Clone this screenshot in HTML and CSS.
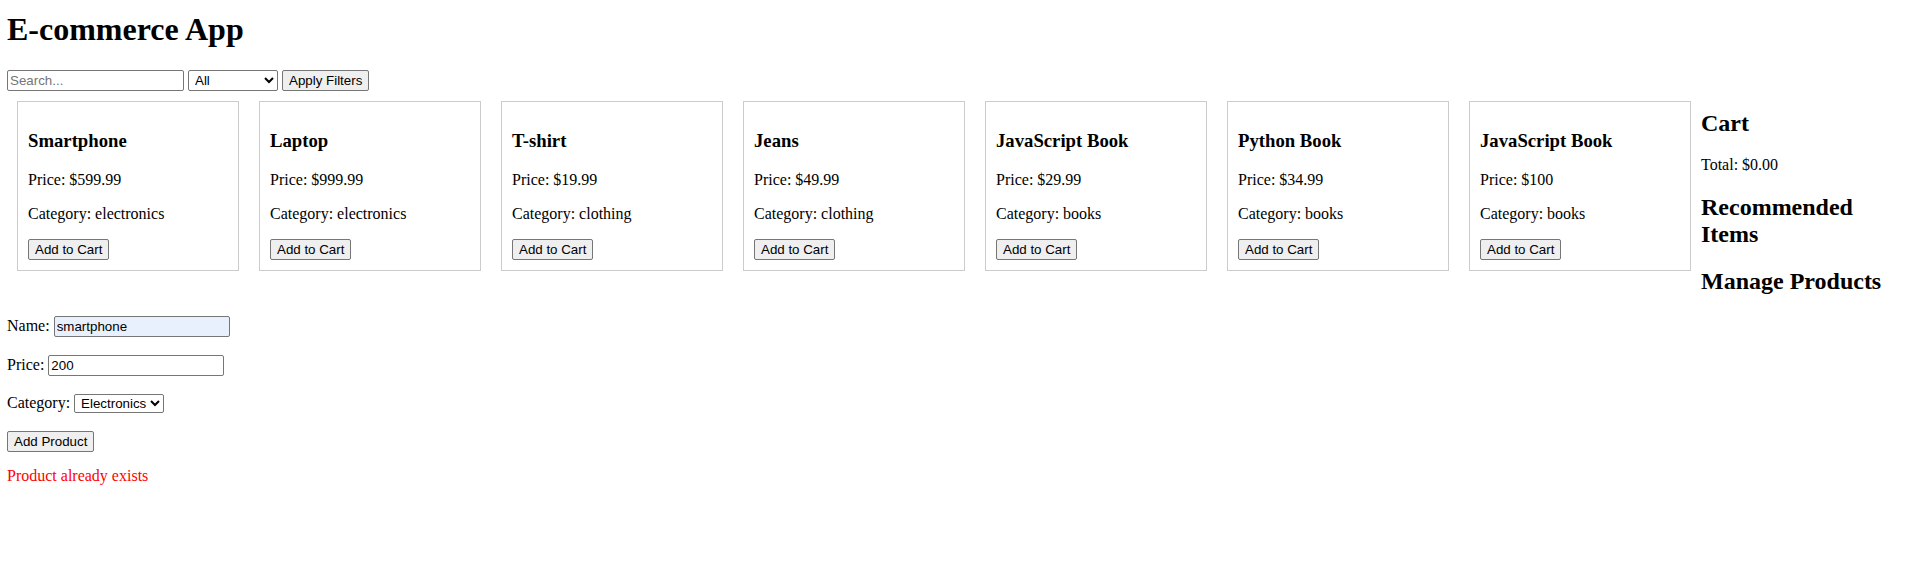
FILE: index.html
```html
<!DOCTYPE html>
<html lang="en">
<head>
<meta charset="utf-8">
<title>E-commerce App</title>
<link rel="stylesheet" href="styles.css">
</head>
<body>
<div class="app">
  <h1 class="title">E-commerce App</h1>
  <div class="filters">
    <input class="ctl search" type="text" placeholder="Search...">
    <select class="ctl select filter-select">
      <option>All</option>
      <option>Electronics</option>
      <option>Clothing</option>
      <option>Books</option>
    </select>
    <button class="ctl btn" type="button">Apply Filters</button>
  </div>
  <div class="main">
    <div class="products">
      <div class="card">
        <h3 class="card-title">Smartphone</h3>
        <p class="card-text">Price: $599.99</p>
        <p class="card-text">Category: electronics</p>
        <button class="ctl btn card-btn" type="button">Add to Cart</button>
      </div>
      <div class="card">
        <h3 class="card-title">Laptop</h3>
        <p class="card-text">Price: $999.99</p>
        <p class="card-text">Category: electronics</p>
        <button class="ctl btn card-btn" type="button">Add to Cart</button>
      </div>
      <div class="card">
        <h3 class="card-title">T-shirt</h3>
        <p class="card-text">Price: $19.99</p>
        <p class="card-text">Category: clothing</p>
        <button class="ctl btn card-btn" type="button">Add to Cart</button>
      </div>
      <div class="card">
        <h3 class="card-title">Jeans</h3>
        <p class="card-text">Price: $49.99</p>
        <p class="card-text">Category: clothing</p>
        <button class="ctl btn card-btn" type="button">Add to Cart</button>
      </div>
      <div class="card">
        <h3 class="card-title">JavaScript Book</h3>
        <p class="card-text">Price: $29.99</p>
        <p class="card-text">Category: books</p>
        <button class="ctl btn card-btn" type="button">Add to Cart</button>
      </div>
      <div class="card">
        <h3 class="card-title">Python Book</h3>
        <p class="card-text">Price: $34.99</p>
        <p class="card-text">Category: books</p>
        <button class="ctl btn card-btn" type="button">Add to Cart</button>
      </div>
      <div class="card">
        <h3 class="card-title">JavaScript Book</h3>
        <p class="card-text">Price: $100</p>
        <p class="card-text">Category: books</p>
        <button class="ctl btn card-btn" type="button">Add to Cart</button>
      </div>
    </div>
    <aside class="sidebar">
      <h2 class="side-title">Cart</h2>
      <p class="side-text">Total: $0.00</p>
      <h2 class="side-title">Recommended Items</h2>
      <h2 class="side-title">Manage Products</h2>
    </aside>
  </div>
  <form class="manage">
    <div class="row"><label>Name: <input class="ctl field autofilled" type="text" value="smartphone"></label></div>
    <div class="row"><label>Price: <input class="ctl field" type="text" value="200"></label></div>
    <div class="row"><label>Category: <select class="ctl select cat-select">
      <option>Electronics</option>
      <option>Clothing</option>
      <option>Books</option>
    </select></label></div>
    <div class="row row-last"><button class="ctl btn" type="button">Add Product</button></div>
    <p class="error">Product already exists</p>
  </form>
</div>
</body>
</html>
```
FILE: styles.css
```css
body {
  margin: 0;
  background: #fff;
  color: #000;
  font-family: "Liberation Serif", "Times New Roman", serif;
  font-size: 16px;
  line-height: 1.149;
}

.app {
  padding: 0 8px 0 7px;
}

.title {
  font-size: 32px;
  font-weight: bold;
  margin: 11px 0 22px;
}

.ctl {
  font-family: "Liberation Sans", Arial, sans-serif;
  font-size: 13.3333px;
  line-height: normal;
  color: #000;
  box-sizing: border-box;
}

.filters {
  display: flex;
  align-items: flex-start;
  gap: 4px;
  height: 21px;
}

.search {
  width: 177px;
  height: 21px;
  padding: 1px 2px;
  border: 1px solid #767676;
  border-radius: 2px;
  background: #fff;
}

.search::placeholder {
  color: #757575;
}

.select {
  border: 1px solid #767676;
  border-radius: 2px;
  background-color: #fff;
  padding: 0 0 0 2px;
}

.filter-select {
  width: 90px;
  height: 21px;
}

.cat-select {
  width: 90px;
  height: 19px;
}

.btn {
  height: 21px;
  padding: 1px 6px;
  border: 1px solid #767676;
  border-radius: 2px;
  background: #efefef;
}

.main {
  display: flex;
  align-items: flex-start;
}

.products {
  display: flex;
  flex: none;
}

.card {
  flex: none;
  width: 200px;
  margin: 10px;
  padding: 10px;
  border: 1px solid #ccc;
}

.card-title {
  font-size: 18.72px;
  font-weight: bold;
  margin: 18.72px 0;
}

.card-text {
  margin: 16px 0;
}

.card-btn {
  display: block;
}

.sidebar {
  flex: 1;
  min-width: 0;
}

.side-title {
  font-size: 24px;
  font-weight: bold;
  margin: 19px 0;
}

.side-text {
  margin: 16px 0;
}

.manage {
  margin: 1.5px 0 0;
}

.row {
  margin: 0 0 18px;
}

.row-last {
  margin-bottom: 15px;
}

.field {
  width: 176px;
  height: 21px;
  padding: 1px 2px;
  border: 1px solid #767676;
  border-radius: 2px;
  background: #fff;
}

.autofilled {
  background: #e8f0fe;
}

.error {
  margin: 0;
  color: #f00;
}
```
